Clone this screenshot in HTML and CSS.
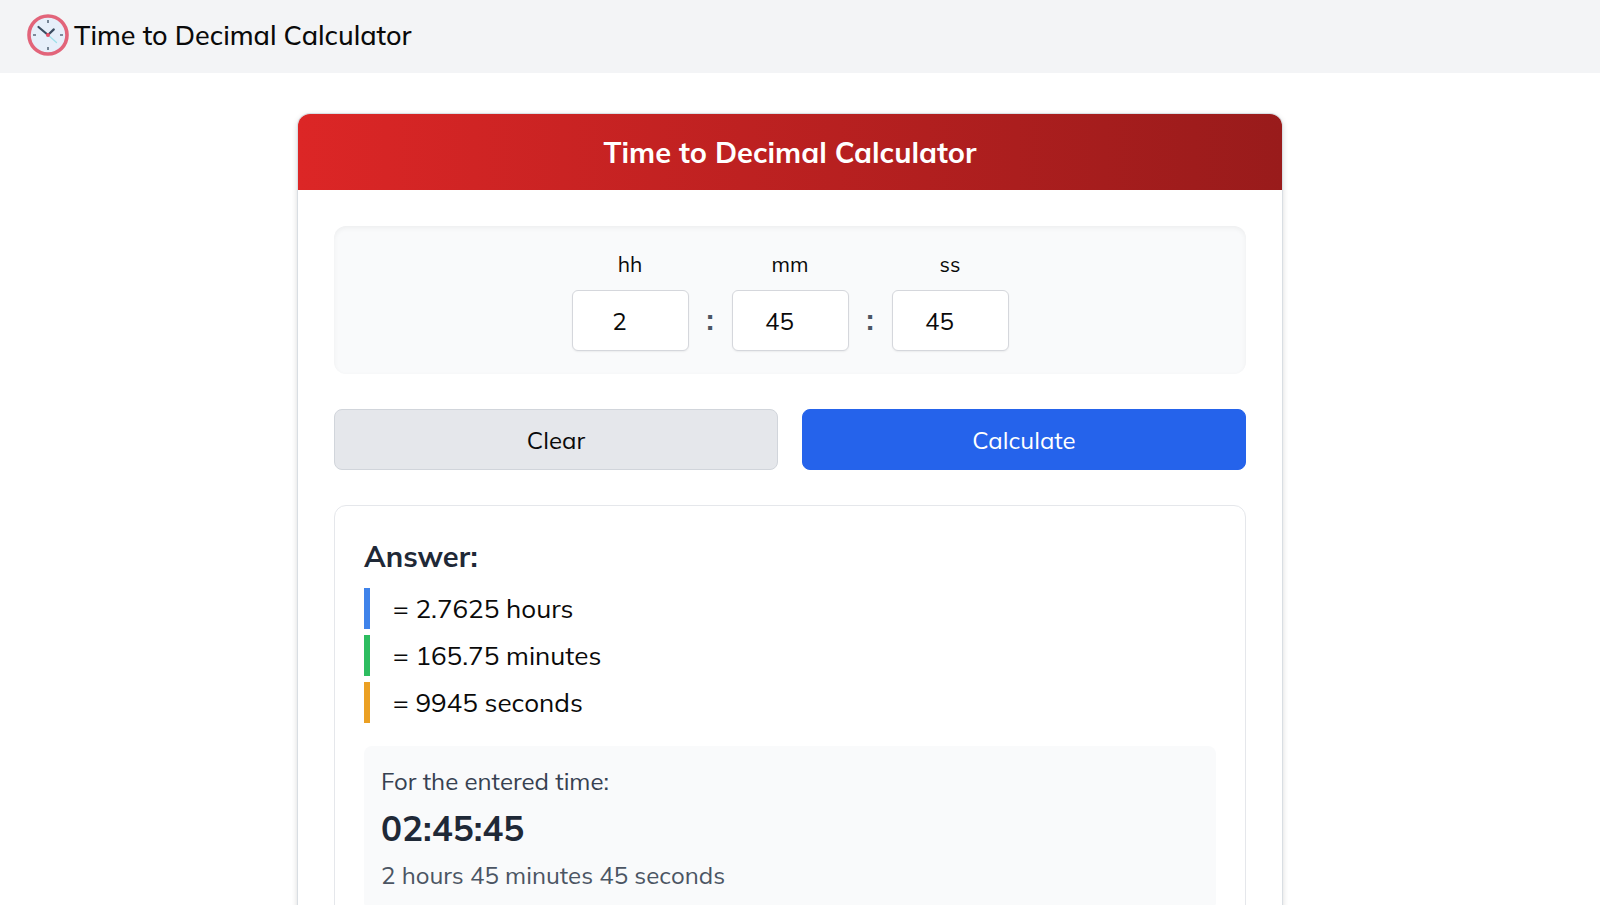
FILE: index.html
```html
<!DOCTYPE html>
<html lang="en">
<head>
<meta charset="utf-8">
<meta name="viewport" content="width=device-width, initial-scale=1">
<title>Time to Decimal Calculator</title>
<link rel="stylesheet" href="styles.css">
</head>
<body>
<header class="topbar">
  <svg class="logo" viewBox="0 0 42 42" aria-hidden="true">
    <circle cx="21" cy="21" r="19" fill="#e6effa" stroke="#e2647a" stroke-width="3.6"/>
    <path d="M21 6v3M21 33v3M6 21h3M33 21h3" stroke="#5b6b7d" stroke-width="1.6"/>
    <path d="M21 21l8.500 7.500" stroke="#9fe0ea" stroke-width="1.300" stroke-linecap="round"/>
    <path d="M11.500 13L21 21l5.800-5.600" fill="none" stroke="#3c4d61" stroke-width="2.200" stroke-linecap="round" stroke-linejoin="round"/>
    <circle cx="21" cy="21" r="2" fill="#e84f68"/>
  </svg>
  <span class="brand">Time to Decimal Calculator</span>
</header>
<main class="page">
  <section class="card">
    <h1 class="card-title">Time to Decimal Calculator</h1>
    <form class="card-body">
      <div class="time-panel">
        <div class="field">
          <label class="field-label" for="hh">hh</label>
          <input class="field-input" id="hh" type="text" inputmode="numeric" value="2">
        </div>
        <span class="colon">:</span>
        <div class="field">
          <label class="field-label" for="mm">mm</label>
          <input class="field-input" id="mm" type="text" inputmode="numeric" value="45">
        </div>
        <span class="colon">:</span>
        <div class="field">
          <label class="field-label" for="ss">ss</label>
          <input class="field-input" id="ss" type="text" inputmode="numeric" value="45">
        </div>
      </div>
      <div class="actions">
        <button class="btn btn-clear" type="button">Clear</button>
        <button class="btn btn-calc" type="button">Calculate</button>
      </div>
      <div class="answer">
        <h2 class="answer-title">Answer:</h2>
        <ul class="results">
          <li class="result result-hours">= 2.7625 hours</li>
          <li class="result result-minutes">= 165.75 minutes</li>
          <li class="result result-seconds">= 9945 seconds</li>
        </ul>
        <div class="entered">
          <p class="entered-label">For the entered time:</p>
          <p class="entered-time">02:45:45</p>
          <p class="entered-words">2 hours 45 minutes 45 seconds</p>
        </div>
      </div>
    </form>
  </section>
</main>
</body>
</html>
```
FILE: styles.css
```css
* { box-sizing: border-box; }

body {
  margin: 0;
  height: 100vh;
  overflow: hidden;
  background: #fff;
  color: #0a0a0a;
  font-family: Mulish, Nunito, Lato, "Open Sans", sans-serif;
  font-size: 24px;
}

h1, h2, p, ul { margin: 0; padding: 0; }

.topbar {
  display: flex;
  align-items: center;
  gap: 5px;
  padding: 14px 27px 17px;
  background: #f3f4f6;
}
.logo { width: 42px; height: 42px; }
.brand { font-size: 27px; line-height: 40px; font-weight: 500; }

.page { padding: 41px 20px 41px 0; }
.card {
  max-width: 984px;
  margin: 0 auto;
  border-radius: 12px;
  background: #fff;
  box-shadow: 0 0 0 1px #d9dee3, 0 2px 6px rgba(0, 0, 0, 0.2);
}
.card-title {
  padding: 18px 24px;
  border-radius: 12px 12px 0 0;
  background: linear-gradient(to right, #dc2626, #991b1b);
  color: #fff;
  font-size: 29px;
  line-height: 40px;
  font-weight: 700;
  text-align: center;
}
.card-body {
  display: flex;
  flex-direction: column;
  gap: 35px;
  padding: 36px;
}

.time-panel {
  display: flex;
  justify-content: center;
  align-items: flex-end;
  padding: 24px 24px 23px;
  border-radius: 12px;
  background: #f9fafb;
  box-shadow: inset 0 2px 5px rgba(0, 0, 0, 0.05);
}
.field {
  display: flex;
  flex-direction: column;
  align-items: center;
  gap: 12px;
}
.field-label { font-size: 21px; line-height: 28px; }
.field-input {
  width: 117px;
  height: 61px;
  padding: 0 32px 0 11px;
  border: 1px solid #d5d7dc;
  border-radius: 6px;
  background: #fff;
  box-shadow: 0 1px 2px rgba(0, 0, 0, 0.06);
  color: inherit;
  font: inherit;
  text-align: center;
}
.colon {
  width: 43px;
  color: #4b5563;
  font-size: 29px;
  line-height: 64px;
  font-weight: 700;
  text-align: center;
}

.actions {
  display: grid;
  grid-template-columns: 1fr 1fr;
  gap: 24px;
}
.btn {
  height: 61px;
  border: 1px solid #d1d5db;
  border-radius: 8px;
  font: inherit;
}
.btn-clear { background: #e5e7eb; color: #0a0a0a; }
.btn-calc { border-color: #2563eb; background: #2563eb; color: #fff; }

.answer {
  padding: 29px;
  border: 1px solid #e5e7eb;
  border-radius: 12px;
}
.answer-title {
  color: #1f2937;
  font-size: 29px;
  line-height: 42px;
  font-weight: 700;
}
.results {
  display: grid;
  gap: 6px;
  margin: 11px 0 23px;
  list-style: none;
}
.result {
  padding-left: 23px;
  border-left: 6px solid;
  font-size: 26px;
  line-height: 41px;
}
.result-hours { border-color: #3f83ea; }
.result-minutes { border-color: #2dbd60; }
.result-seconds { border-color: #eba023; }

.entered {
  padding: 17px;
  border-radius: 8px;
  background: #f9fafb;
}
.entered-label { color: #374151; line-height: 36px; }
.entered-time {
  margin: 6px 0;
  color: #1f2937;
  font-size: 35px;
  line-height: 46px;
  font-weight: 700;
}
.entered-words { color: #4b5563; line-height: 36px; }
```
